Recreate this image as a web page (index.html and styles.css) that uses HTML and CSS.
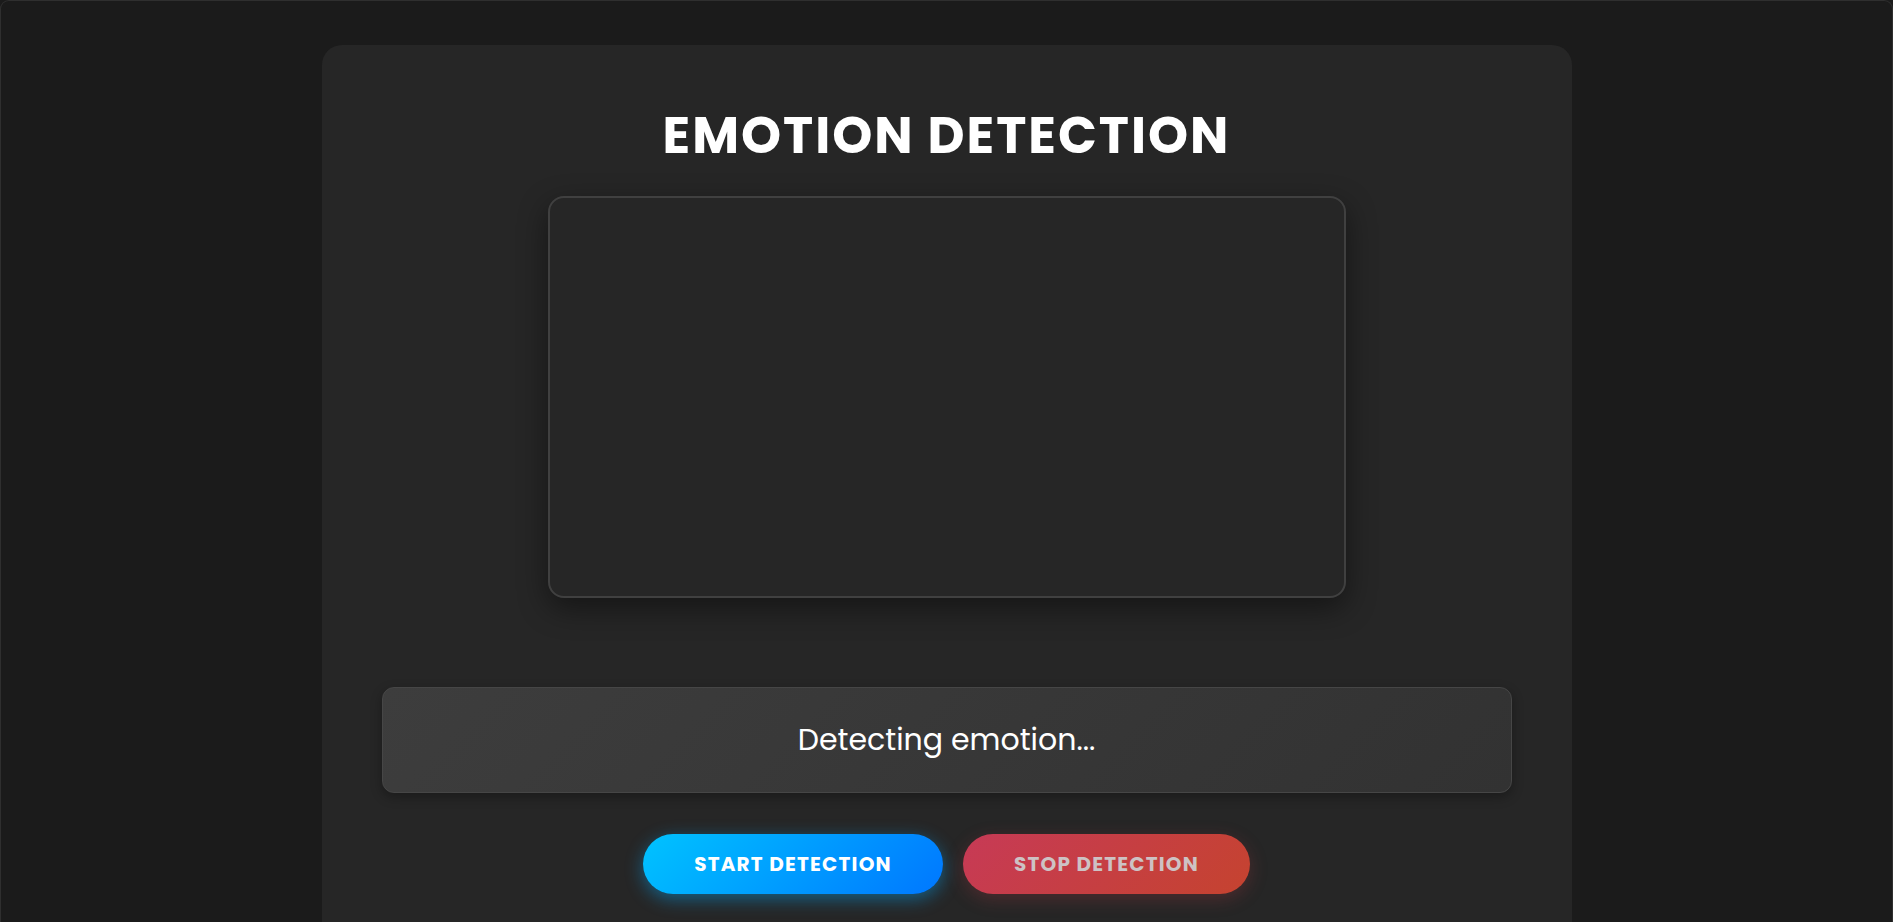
FILE: index.html
```html
<!DOCTYPE html>
<html lang="en">
<head>
<meta charset="utf-8">
<title>Emotion Detection</title>
<link rel="stylesheet" href="styles.css">
</head>
<body>
<div class="frame">
  <main class="card">
    <h1 class="title">EMOTION DETECTION</h1>
    <div class="video-box"></div>
    <div class="status">Detecting emotion...</div>
    <div class="actions">
      <button class="btn btn-start" type="button">Start Detection</button>
      <button class="btn btn-stop" type="button">Stop Detection</button>
    </div>
  </main>
</div>
</body>
</html>
```

FILE: styles.css
```css
html, body {
  margin: 0;
  padding: 0;
  height: 100%;
  overflow: hidden;
  background: #1b1b1b;
}

body {
  font-family: "Poppins", "Inter", "Noto Sans", sans-serif;
  color: #ffffff;
}

.frame {
  box-sizing: border-box;
  min-height: 100vh;
  border: 1px solid #2f2f2f;
  border-bottom: none;
  border-radius: 9px 9px 0 0;
  padding-top: 44px;
  display: flex;
  justify-content: center;
}

.card {
  box-sizing: border-box;
  width: 1250px;
  min-height: 900px;
  background: #262626;
  border-radius: 20px;
  padding: 60px 60px 40px;
  display: flex;
  flex-direction: column;
  align-items: center;
}

.title {
  margin: 0;
  font-size: 51px;
  font-weight: 700;
  letter-spacing: 2px;
  line-height: 1.2;
}

.video-box {
  box-sizing: border-box;
  width: 798px;
  height: 402px;
  margin-top: 30px;
  border: 2px solid #404040;
  border-radius: 16px;
  background: #262626;
  box-shadow: 0 10px 30px rgba(0, 0, 0, 0.45);
}

.status {
  box-sizing: border-box;
  align-self: stretch;
  height: 106px;
  margin-top: 89px;
  display: flex;
  align-items: center;
  justify-content: center;
  background: linear-gradient(135deg, #3d3d3d, #323232);
  border: 1px solid #464646;
  border-radius: 12px;
  box-shadow: 0 4px 12px rgba(0, 0, 0, 0.3);
  font-size: 30px;
  font-weight: 400;
}

.actions {
  margin-top: 41px;
  display: flex;
  gap: 20px;
}

.btn {
  height: 60px;
  border: none;
  border-radius: 30px;
  padding: 0;
  font-family: inherit;
  font-size: 20px;
  font-weight: 700;
  letter-spacing: 1.2px;
  text-transform: uppercase;
  color: #ffffff;
  cursor: pointer;
}

.btn-start {
  width: 300px;
  background: linear-gradient(135deg, #00c3ff, #0077ff);
  box-shadow: 0 5px 18px rgba(0, 170, 255, 0.45);
}

.btn-stop {
  width: 287px;
  background: linear-gradient(135deg, #c73a56, #c5432f);
  color: #cdc2c4;
  box-shadow: 0 5px 18px rgba(200, 60, 70, 0.25);
}
```
